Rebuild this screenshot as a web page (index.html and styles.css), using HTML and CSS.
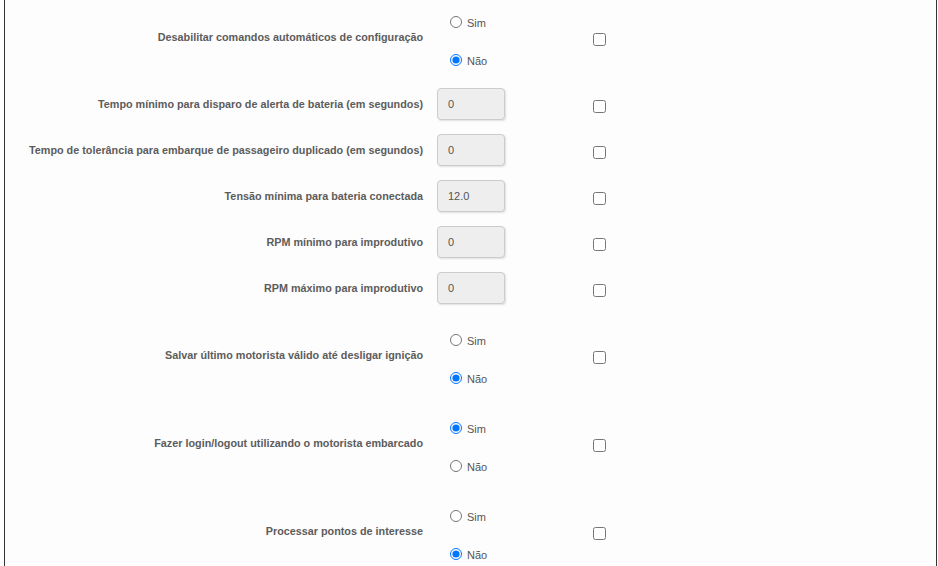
FILE: index.html
```html
<!DOCTYPE html>
<html lang="pt">
<head>
<meta charset="utf-8">
<title>Configurações</title>
<link rel="stylesheet" href="styles.css">
</head>
<body>
<div class="panel">
  <div class="row row-radio">
    <label class="row-label">Desabilitar comandos automáticos de configuração</label>
    <div class="radio-group">
      <label class="opt"><input type="radio" name="r1"> Sim</label>
      <label class="opt"><input type="radio" name="r1" checked> Não</label>
    </div>
    <input class="chk" type="checkbox">
  </div>
  <div class="row">
    <label class="row-label">Tempo mínimo para disparo de alerta de bateria (em segundos)</label>
    <div class="field"><input class="text-input" type="text" value="0"></div>
    <input class="chk" type="checkbox">
  </div>
  <div class="row">
    <label class="row-label">Tempo de tolerância para embarque de passageiro duplicado (em segundos)</label>
    <div class="field"><input class="text-input" type="text" value="0"></div>
    <input class="chk" type="checkbox">
  </div>
  <div class="row">
    <label class="row-label">Tensão mínima para bateria conectada</label>
    <div class="field"><input class="text-input" type="text" value="12.0"></div>
    <input class="chk" type="checkbox">
  </div>
  <div class="row">
    <label class="row-label">RPM mínimo para improdutivo</label>
    <div class="field"><input class="text-input" type="text" value="0"></div>
    <input class="chk" type="checkbox">
  </div>
  <div class="row">
    <label class="row-label">RPM máximo para improdutivo</label>
    <div class="field"><input class="text-input" type="text" value="0"></div>
    <input class="chk" type="checkbox">
  </div>
  <div class="row row-radio">
    <label class="row-label">Salvar último motorista válido até desligar ignição</label>
    <div class="radio-group">
      <label class="opt"><input type="radio" name="r2"> Sim</label>
      <label class="opt"><input type="radio" name="r2" checked> Não</label>
    </div>
    <input class="chk" type="checkbox">
  </div>
  <div class="row row-radio">
    <label class="row-label">Fazer login/logout utilizando o motorista embarcado</label>
    <div class="radio-group">
      <label class="opt"><input type="radio" name="r3" checked> Sim</label>
      <label class="opt"><input type="radio" name="r3"> Não</label>
    </div>
    <input class="chk" type="checkbox">
  </div>
  <div class="row row-radio">
    <label class="row-label">Processar pontos de interesse</label>
    <div class="radio-group">
      <label class="opt"><input type="radio" name="r4"> Sim</label>
      <label class="opt"><input type="radio" name="r4" checked> Não</label>
    </div>
    <input class="chk" type="checkbox">
  </div>
</div>
</body>
</html>
```

FILE: styles.css
```css
html, body {
  margin: 0;
  padding: 0;
  background: #ffffff;
}
body {
  font-family: "Liberation Sans", Arial, sans-serif;
  color: #555555;
  overflow: hidden;
}
.panel {
  margin-left: 4px;
  width: 931px;
  min-height: 566px;
  border-left: 1px solid #333333;
  border-right: 1px solid #333333;
  background: #fdfdfd;
}
.row {
  display: grid;
  grid-template-columns: 418px 166px auto;
  align-items: center;
  height: 32px;
  margin-bottom: 14px;
}
.row-radio {
  height: 74px;
}
.row-label {
  text-align: right;
  font-size: 10.8px;
  font-weight: bold;
  color: #5c5c5c;
}
.field, .radio-group {
  margin-left: 14px;
}
.text-input {
  box-sizing: border-box;
  width: 68px;
  height: 32px;
  border: 1px solid #cccccc;
  border-radius: 4px;
  background: #eeeeee;
  box-shadow: 1px 1px 2px rgba(0, 0, 0, 0.12);
  padding: 0 10px;
  font-family: "Liberation Sans", Arial, sans-serif;
  font-size: 11px;
  color: #555555;
  outline: none;
}
.radio-group {
  align-self: start;
  display: flex;
  flex-direction: column;
  gap: 22px;
  padding-top: 15px;
  padding-left: 8px;
}
.opt {
  display: flex;
  align-items: center;
  height: 16px;
  font-size: 11px;
  color: #555555;
}
.opt input {
  margin: 0 5px 3px 5px;
  width: 12px;
  height: 12px;
}
.chk {
  margin: 5px 0 0 4px;
  width: 13px;
  height: 13px;
}
```
